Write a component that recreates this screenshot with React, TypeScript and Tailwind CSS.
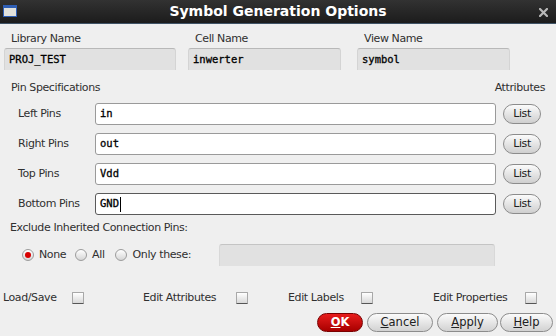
import React from 'react';

const sans = { fontFamily: '"DejaVu Sans", Verdana, sans-serif' };
const mono = { fontFamily: '"DejaVu Sans Mono", "Liberation Mono", monospace' };

function NameField({ label, value, width, className = '' }: { label: string; value: string; width: string; className?: string }) {
  return (
    <div className={`flex flex-col ${width} ${className}`}>
      <div className="h-[24px] pl-[7px] pt-[9px] text-[11px] leading-[12px] tracking-[-0.4px] text-[#303030]">{label}</div>
      <div
        className="h-[22px] rounded-t-[3px] border-t border-x border-t-[#b8b8b8] border-x-[#d4d4d4] bg-[#e1e1e1] pl-[4px] text-[10.5px] leading-[21px] text-black [-webkit-text-stroke:0.3px_black]"
        style={mono}
      >
        {value}
      </div>
    </div>
  );
}

function PinRow({ label, value, focused = false }: { label: string; value: string; focused?: boolean }) {
  return (
    <div className="flex h-[22px] items-center">
      <div className="w-[95px] whitespace-nowrap pl-[18px] text-[11px] tracking-[-0.4px] text-[#303030]">{label}</div>
      <div
        className={`flex h-[22px] w-[401px] items-center rounded-[3px] border bg-white pl-[4px] text-[10.5px] text-black [-webkit-text-stroke:0.3px_black] ${
          focused ? 'border-[#5a5a5a]' : 'border-[#9a9a9a]'
        }`}
        style={mono}
      >
        {value}
        {focused && <span className="ml-[1px] h-[15px] w-px bg-black" />}
      </div>
      <button className="ml-[7px] h-[20px] w-[38px] rounded-full border border-[#8c8c8c] bg-gradient-to-b from-[#fbfbfb] to-[#cfcfcf] text-[11px] leading-[18px] tracking-[-0.4px] text-[#202020]">
        List
      </button>
    </div>
  );
}

function Radio({ checked = false }: { checked?: boolean }) {
  return (
    <span className="flex h-[12px] w-[12px] items-center justify-center rounded-full border border-[#9c9c9c] bg-gradient-to-b from-[#ffffff] to-[#d6d6d6]">
      {checked && <span className="h-[6px] w-[6px] rounded-full bg-[#d80000]" />}
    </span>
  );
}

function Check() {
  return (
    <span className="block h-[12px] w-[12px] rounded-[1px] border border-[#a8a8a8] border-b-[#555] bg-gradient-to-b from-[#ffffff] to-[#d8d8d8]" />
  );
}

function Btn({ children, width, primary = false, className = '' }: { children: React.ReactNode; width: string; primary?: boolean; className?: string }) {
  return (
    <button
      className={`h-[19px] ${width} rounded-full border text-[11.5px] leading-[17px] ${className} ${
        primary
          ? 'border-[#7a0000] bg-gradient-to-b from-[#e81c1c] to-[#a80000] font-bold text-white'
          : 'border-[#8c8c8c] bg-gradient-to-b from-[#fbfbfb] to-[#d2d2d2] text-[#202020]'
      }`}
    >
      {children}
    </button>
  );
}

export default function App() {
  return (
    <div className="h-[336px] w-[556px] overflow-hidden bg-[#efefef]" style={sans}>
      {/* title bar */}
      <div className="relative flex h-[24px] items-center justify-center border-b border-[#3f5366] bg-gradient-to-b from-[#323232] to-[#1c1c1c]">
        <div className="absolute left-[3px] top-[5px] h-[12px] w-[14px] border border-[#2f5fb5] border-t-[3px] bg-[#e2e2dc]" />
        <span className="text-[14px] font-bold text-white">Symbol Generation Options</span>
        <svg className="absolute right-[8px] top-[8px]" width="9" height="9" viewBox="0 0 9 9">
          <path d="M1 1 L8 8 M8 1 L1 8" stroke="#b8b8b8" strokeWidth="2.2" strokeLinecap="square" />
        </svg>
      </div>

      {/* names */}
      <div className="flex pl-[4px]">
        <NameField label="Library Name" value="PROJ_TEST" width="w-[172px]" />
        <NameField label="Cell Name" value="inwerter" width="w-[153px]" className="ml-[12px]" />
        <NameField label="View Name" value="symbol" width="w-[153px]" className="ml-[16px]" />
      </div>

      {/* pin specs */}
      <div className="mt-[12px] flex h-[12px] items-center justify-between pl-[11px] pr-[11px] text-[11px] tracking-[-0.4px] text-[#303030]">
        <span>Pin Specifications</span>
        <span>Attributes</span>
      </div>
      <div className="mt-[9px] flex flex-col gap-[8px]">
        <PinRow label="Left Pins" value="in" />
        <PinRow label="Right Pins" value="out" />
        <PinRow label="Top Pins" value="Vdd" />
        <PinRow label="Bottom Pins" value="GND" focused />
      </div>

      <div className="mt-[7px] h-[12px] pl-[10px] text-[11px] leading-[12px] tracking-[-0.4px] text-[#303030]">
        Exclude Inherited Connection Pins:
      </div>

      <div className="mt-[10px] flex h-[22px] items-center text-[11px] tracking-[-0.4px] text-[#303030]">
        <div className="ml-[22px]"><Radio checked /></div>
        <span className="ml-[5px]">None</span>
        <div className="ml-[9px]"><Radio /></div>
        <span className="ml-[5px]">All</span>
        <div className="ml-[10px]"><Radio /></div>
        <span className="ml-[6px] w-[86px]">Only these:</span>
        <div className="h-[22px] w-[276px] rounded-t-[3px] border-t border-x border-t-[#c4c4c4] border-x-[#d8d8d8] bg-[#e1e1e1]" />
      </div>

      <div className="mt-[25px] flex h-[14px] items-center text-[11px] tracking-[-0.4px] text-[#303030]">
        <span className="ml-[3px] w-[69px]">Load/Save</span>
        <Check />
        <span className="ml-[59px] w-[93px]">Edit Attributes</span>
        <Check />
        <span className="ml-[40px] w-[73px]">Edit Labels</span>
        <Check />
        <span className="ml-[60px] w-[92px]">Edit Properties</span>
        <Check />
      </div>

      <div className="mt-[8px] flex items-center justify-end pr-[3px]">
        <Btn width="w-[46px]" primary><span className="underline">O</span>K</Btn>
        <Btn width="w-[66px]" className="ml-[4px]"><span className="underline">C</span>ancel</Btn>
        <Btn width="w-[61px]" className="ml-[4px]"><span className="underline">A</span>pply</Btn>
        <Btn width="w-[53px]" className="ml-[2px]"><span className="underline">H</span>elp</Btn>
      </div>
    </div>
  );
}
